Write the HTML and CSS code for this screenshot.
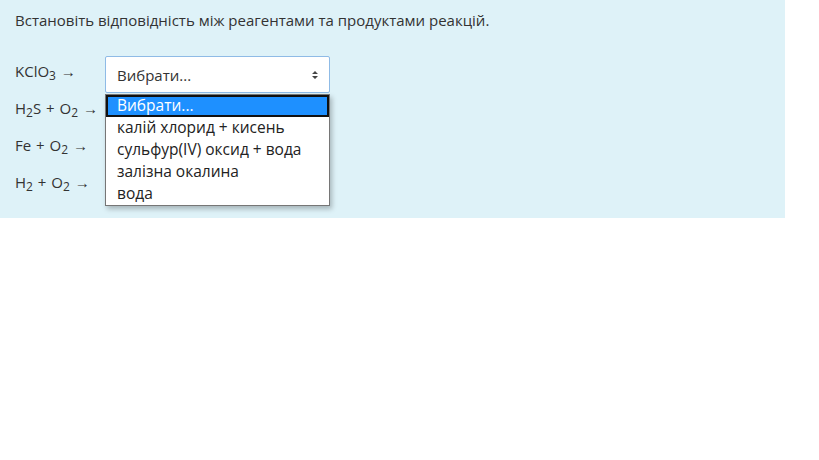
FILE: index.html
```html
<!DOCTYPE html>
<html lang="uk">
<head>
<meta charset="utf-8">
<link rel="stylesheet" href="styles.css">
</head>
<body>
<div class="panel">
  <p class="prompt">Встановіть відповідність між реагентами та продуктами реакцій.</p>
  <div class="rows">
    <div class="row">
      <span class="label">KClO<sub>3</sub> →</span>
      <div class="select-wrap">
        <div class="select">
          <span>Вибрати...</span>
          <svg class="arrows" width="8" height="10" viewBox="0 0 8 10"><path d="M1 4 L4 1 L7 4 Z M1 6 L4 9 L7 6 Z" fill="#444"/></svg>
        </div>
        <ul class="dropdown">
          <li class="opt selected">Вибрати...</li>
          <li class="opt">калій хлорид + кисень</li>
          <li class="opt">сульфур(IV) оксид + вода</li>
          <li class="opt">залізна окалина</li>
          <li class="opt">вода</li>
        </ul>
      </div>
    </div>
    <div class="row"><span class="label">H<sub>2</sub>S + O<sub>2</sub> →</span></div>
    <div class="row"><span class="label">Fe + O<sub>2</sub> →</span></div>
    <div class="row"><span class="label">H<sub>2</sub> + O<sub>2</sub> →</span></div>
  </div>
</div>
</body>
</html>
```
FILE: styles.css
```css
html, body {
  margin: 0;
  padding: 0;
  background: #fff;
}
body {
  font-family: "Open Sans", "Noto Sans", sans-serif;
  font-size: 15px;
  color: #333;
}
.panel {
  width: 785px;
  height: 218px;
  box-sizing: border-box;
  background: #def2f8;
  padding: 10px 15px 0 15px;
}
.prompt {
  margin: 0;
  line-height: 21px;
}
.rows {
  margin-top: 25px;
  display: flex;
  flex-direction: column;
}
.row {
  height: 37px;
  display: flex;
  align-items: center;
}
.label {
  width: 90px;
  white-space: nowrap;
  position: relative;
  top: -4px;
  word-spacing: 1px;
}
.label sub {
  font-size: 12px;
  vertical-align: -3px;
  line-height: 0;
}
.select-wrap {
  position: relative;
}
.select {
  width: 225px;
  height: 37px;
  box-sizing: border-box;
  background: #fff;
  border: 1px solid #8fbbe6;
  border-radius: 2px;
  display: flex;
  align-items: center;
  justify-content: space-between;
  padding: 0 10px 0 11px;
}
.arrows {
  display: block;
}
.dropdown {
  position: absolute;
  left: 0;
  top: 38px;
  width: 225px;
  box-sizing: border-box;
  margin: 0;
  padding: 0;
  list-style: none;
  background: #fff;
  border: 1px solid #767676;
  box-shadow: 2px 3px 5px rgba(0,0,0,0.25);
  font-size: 15.5px;
  color: #222;
}
.opt {
  height: 22px;
  line-height: 20px;
  padding-left: 11px;
}
.opt.selected {
  background: #1e90ff;
  color: #fff;
  border: 2px solid #111;
  line-height: 17px;
  height: 22px;
  box-sizing: border-box;
  padding-left: 9px;
}
```
